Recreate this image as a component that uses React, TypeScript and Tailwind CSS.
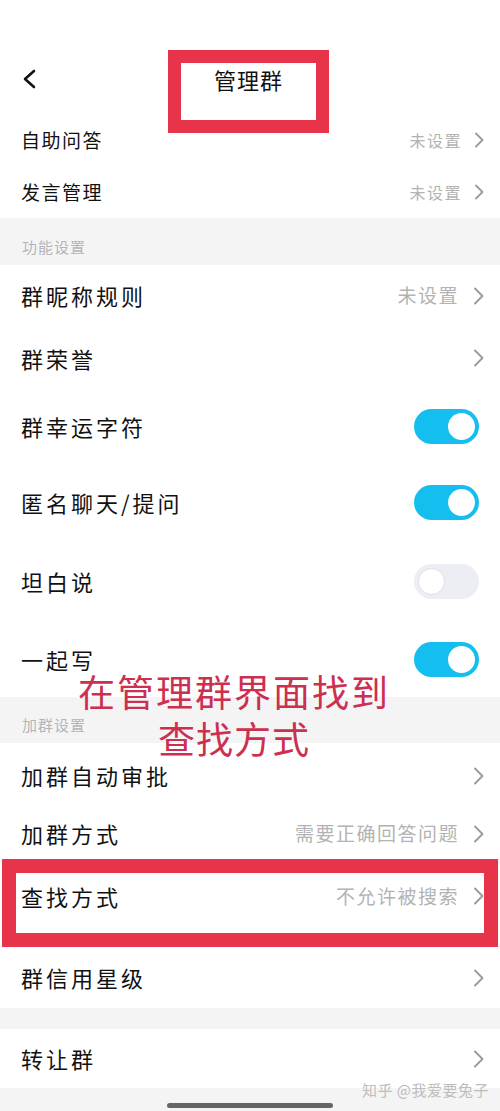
const font = { fontFamily: '"Noto Sans CJK SC", "Noto Sans", sans-serif' };

function Chevron({ small }: { small?: boolean }) {
  return small ? (
    <svg className="ml-[12px]" width="10" height="16" viewBox="0 0 10 16">
      <path d="M2 1.5 L8.5 8 L2 14.5" fill="none" stroke="#9a9a9a" strokeWidth="1.8" strokeLinecap="round" strokeLinejoin="round" />
    </svg>
  ) : (
    <svg className="ml-[14px]" width="11" height="18" viewBox="0 0 11 18">
      <path d="M2 1.5 L9.5 9 L2 16.5" fill="none" stroke="#9a9a9a" strokeWidth="1.9" strokeLinecap="round" strokeLinejoin="round" />
    </svg>
  );
}

function Toggle({ on }: { on: boolean }) {
  return on ? (
    <span className="flex h-[35px] w-[65px] items-center justify-end rounded-full bg-[#14bff0] pr-[4px]">
      <span className="h-[27px] w-[27px] rounded-full bg-white" />
    </span>
  ) : (
    <span className="flex h-[35px] w-[65px] items-center justify-start rounded-full bg-[#eceef3] pl-[4px]">
      <span className="h-[27px] w-[27px] rounded-full border border-[#dcdfe5] bg-white" />
    </span>
  );
}

type RowProps = {
  label: string;
  h: string;
  value?: string;
  arrow?: boolean;
  toggle?: boolean;
  small?: boolean;
};

function Row({ label, h, value, arrow, toggle, small }: RowProps) {
  return (
    <div className={`flex items-center justify-between bg-white pl-[21px] pr-[16px] ${h}`}>
      <span
        className={
          small
            ? "text-[19px] tracking-[1.5px] text-[#111]"
            : "text-[22px] tracking-[3px] text-[#111]"
        }
      >
        {label}
      </span>
      <div className="flex items-center">
        {value && (
          <span
            className={
              small
                ? "text-[16px] tracking-[1.5px] text-[#b3b3b3]"
                : "text-[19px] tracking-[1.5px] text-[#b3b3b3]"
            }
          >
            {value}
          </span>
        )}
        {arrow && <Chevron small={small} />}
        {toggle !== undefined && (
          <span className="mr-[5px]">
            <Toggle on={toggle} />
          </span>
        )}
      </div>
    </div>
  );
}

function SectionTitle({ text, h }: { text: string; h: string }) {
  return (
    <div className={`flex items-end bg-[#f4f4f5] pb-[7px] pl-[22px] ${h}`}>
      <span className="text-[15px] tracking-[1px] text-[#b4b4b8]">{text}</span>
    </div>
  );
}

export default function App() {
  return (
    <div className="relative h-[1111px] w-[500px] overflow-hidden bg-white" style={font}>
      {/* header */}
      <div className="relative h-[114px]">
        <svg className="absolute left-[22px] top-[69px]" width="15" height="20" viewBox="0 0 15 20">
          <path d="M12 2 L3 10 L12 18" fill="none" stroke="#111" strokeWidth="2.6" strokeLinecap="round" strokeLinejoin="round" />
        </svg>
        <div className="absolute left-[168px] top-[50px] flex h-[83px] w-[161px] justify-center border-[13px] border-[#e8344a] bg-white pt-[2px]">
          <span className="text-[22px] leading-[28px] tracking-[1px] text-[#111]">管理群</span>
        </div>
      </div>

      <Row label="自助问答" value="未设置" arrow small h="h-[52px]" />
      <Row label="发言管理" value="未设置" arrow small h="h-[52px]" />

      <SectionTitle text="功能设置" h="h-[47px]" />
      <Row label="群昵称规则" value="未设置" arrow h="h-[61px]" />
      <Row label="群荣誉" arrow h="h-[64px]" />
      <Row label="群幸运字符" toggle h="h-[73px]" />
      <Row label="匿名聊天/提问" toggle h="h-[79px]" />
      <Row label="坦白说" toggle={false} h="h-[79px]" />
      <Row label="一起写" toggle h="h-[76px]" />

      <SectionTitle text="加群设置" h="h-[46px]" />
      <Row label="加群自动审批" arrow h="h-[65px]" />
      <Row label="加群方式" value="需要正确回答问题" arrow h="h-[51px]" />

      <div className="mx-[2px] border-[14px] border-[#e8344a]">
        <div className="flex h-[60px] items-center justify-between bg-white pb-[14px] pl-[5px] pr-0">
          <span className="text-[22px] tracking-[3px] text-[#111]">查找方式</span>
          <div className="flex items-center">
            <span className="text-[19px] tracking-[1.5px] text-[#b3b3b3]">不允许被搜索</span>
            <Chevron />
          </div>
        </div>
      </div>

      <Row label="群信用星级" arrow h="h-[61px]" />
      <div className="h-[21px] bg-[#f4f4f5]" />
      <Row label="转让群" arrow h="h-[59px]" />

      <div className="flex h-[23px] items-end justify-center bg-[#f4f4f5] pb-[3px]">
        <span className="h-[5px] w-[166px] rounded-full bg-[#666]" />
      </div>

      {/* watermark */}
      <span className="absolute left-[362px] top-[1079px] text-[15px] tracking-[0.5px] text-[#bdbdbd]">知乎 @我爱要兔子</span>

      {/* handwritten annotation */}
      <span className="absolute left-[78px] top-[674px] text-[37px] leading-[34px] tracking-[2px] text-[#cc3050]">在管理群界面找到</span>
      <span className="absolute left-[158px] top-[721px] text-[37px] leading-[34px] tracking-[1px] text-[#cc3050]">查找方式</span>
    </div>
  );
}
